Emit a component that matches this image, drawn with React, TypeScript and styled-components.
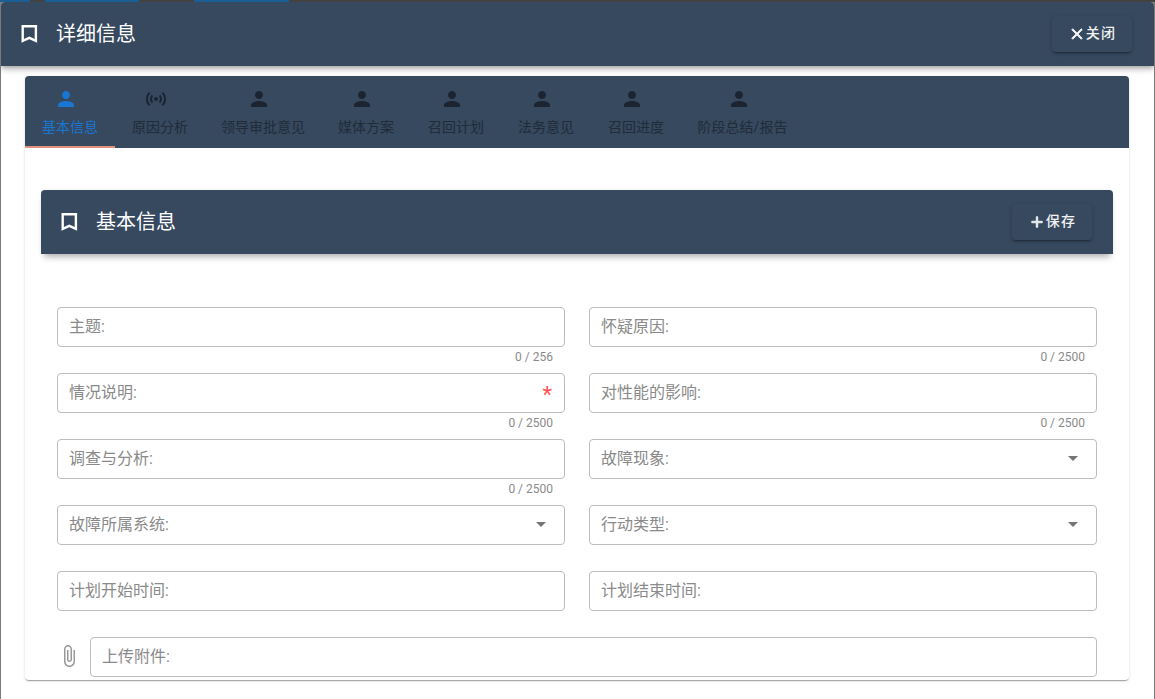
import React from "react";
import styled, { createGlobalStyle } from "styled-components";

const GlobalStyle = createGlobalStyle`
  html, body {
    margin: 0;
    padding: 0;
    height: 100%;
    overflow: hidden;
    background: #7a7a7a;
    font-family: Roboto, "Noto Sans CJK SC", sans-serif;
  }
`;

const BookmarkIcon = () => (
  <svg width="24" height="24" viewBox="0 0 24 24" fill="none" stroke="currentColor" strokeWidth="2.4">
    <path d="M5.700 4.200H18.900V18.800L12.300 15.800 5.700 18.800Z" />
  </svg>
);

const PersonIcon = () => (
  <svg width="24" height="24" viewBox="0 0 24 24" fill="currentColor">
    <path d="M12 12c2.210 0 4-1.790 4-4s-1.790-4-4-4-4 1.790-4 4 1.790 4 4 4zm0 2c-2.670 0-8 1.340-8 4v2h16v-2c0-2.660-5.330-4-8-4z" />
  </svg>
);

const CastIcon = () => (
  <svg width="24" height="24" viewBox="0 0 24 24" fill="currentColor">
    <path d="M7.760 16.240C6.670 15.160 6 13.660 6 12s.67-3.160 1.760-4.240l1.420 1.420C8.450 9.900 8 10.900 8 12c0 1.100.45 2.100 1.170 2.830l-1.410 1.410zm8.480 0C17.330 15.160 18 13.660 18 12s-.67-3.160-1.760-4.240l-1.420 1.420C15.550 9.900 16 10.900 16 12c0 1.100-.45 2.100-1.170 2.830l1.410 1.410zM12 10c-1.100 0-2 .9-2 2s.9 2 2 2 2-.9 2-2-.9-2-2-2zm8 2c0 2.210-.9 4.210-2.340 5.660l1.420 1.420C20.880 17.260 22 14.760 22 12s-1.120-5.260-2.920-7.080l-1.420 1.420C19.100 7.790 20 9.790 20 12zM6.340 6.340 4.920 4.920C3.120 6.740 2 9.240 2 12s1.120 5.260 2.920 7.080l1.420-1.420C4.900 16.210 4 14.210 4 12s.9-4.210 2.340-5.660z" />
  </svg>
);

const CloseIcon = () => (
  <svg width="18" height="18" viewBox="0 0 24 24" fill="currentColor" stroke="currentColor" strokeWidth="1.2">
    <path d="M19 6.410 17.590 5 12 10.590 6.410 5 5 6.410 10.590 12 5 17.590 6.410 19 12 13.410 17.590 19 19 17.590 13.410 12z" />
  </svg>
);

const PlusIcon = () => (
  <svg width="18" height="18" viewBox="0 0 24 24" fill="currentColor" stroke="currentColor" strokeWidth="1.2">
    <path d="M19 13h-6v6h-2v-6H5v-2h6V5h2v6h6v2z" />
  </svg>
);

const ClipIcon = () => (
  <svg width="24" height="24" viewBox="0 0 24 24" fill="currentColor">
    <path d="M16.500 6v11.500c0 2.210-1.790 4-4 4s-4-1.790-4-4V5c0-1.380 1.120-2.500 2.500-2.500s2.500 1.120 2.500 2.500v10.500c0 .55-.45 1-1 1s-1-.45-1-1V6H10v9.500c0 1.380 1.120 2.500 2.500 2.500s2.500-1.120 2.500-2.500V5c0-2.210-1.790-4-4-4S7 2.790 7 5v12.500c0 3.040 2.460 5.500 5.500 5.500s5.500-2.460 5.500-5.500V6h-1.500z" />
  </svg>
);

const tabs = [
  { label: "基本信息", icon: "person", width: 90 },
  { label: "原因分析", icon: "cast", width: 90 },
  { label: "领导审批意见", icon: "person", width: 116 },
  { label: "媒体方案", icon: "person", width: 90 },
  { label: "召回计划", icon: "person", width: 90 },
  { label: "法务意见", icon: "person", width: 90 },
  { label: "召回进度", icon: "person", width: 90 },
  { label: "阶段总结/报告", icon: "person", width: 123 },
];

type Field = { label: string; count?: string; required?: boolean; select?: boolean };

const fields: Field[] = [
  { label: "主题:", count: "0 / 256" },
  { label: "怀疑原因:", count: "0 / 2500" },
  { label: "情况说明:", count: "0 / 2500", required: true },
  { label: "对性能的影响:", count: "0 / 2500" },
  { label: "调查与分析:", count: "0 / 2500" },
  { label: "故障现象:", select: true },
  { label: "故障所属系统:", select: true },
  { label: "行动类型:", select: true },
  { label: "计划开始时间:" },
  { label: "计划结束时间:" },
];

const App = () => {
  return (
    <>
      <GlobalStyle />
      <Backdrop>
        <BackTab $width={30} />
        <BackTab $width={94} $gap={15} />
        <BackTab $width={95} $gap={55} />
      </Backdrop>
      <Dialog>
        <DialogBar>
          <BarTitle>
            <BookmarkIcon />
            <DialogTitle>详细信息</DialogTitle>
          </BarTitle>
          <BarButton>
            <CloseIcon />
            <ButtonText>关闭</ButtonText>
          </BarButton>
        </DialogBar>
        <Card>
          <TabBar>
            {tabs.map((tab, i) => (
              <Tab key={tab.label} $active={i === 0} $width={tab.width}>
                <TabIcon>{tab.icon === "cast" ? <CastIcon /> : <PersonIcon />}</TabIcon>
                <TabLabel $active={i === 0}>{tab.label}</TabLabel>
              </Tab>
            ))}
          </TabBar>
          <CardBody>
            <SectionBar>
              <BarTitle>
                <BookmarkIcon />
                <SectionTitle>基本信息</SectionTitle>
              </BarTitle>
              <BarButton>
                <PlusIcon />
                <ButtonText>保存</ButtonText>
              </BarButton>
            </SectionBar>
            <FormGrid>
              {fields.map((field) => (
                <FieldCell key={field.label}>
                  <FieldBox>
                    <FieldLabel>{field.label}</FieldLabel>
                    {field.required && <Required>*</Required>}
                    {field.select && <Arrow />}
                  </FieldBox>
                  <Count>{field.count}</Count>
                </FieldCell>
              ))}
            </FormGrid>
            <UploadRow>
              <ClipWrap>
                <ClipIcon />
              </ClipWrap>
              <FieldBox>
                <FieldLabel>上传附件:</FieldLabel>
              </FieldBox>
            </UploadRow>
          </CardBody>
        </Card>
      </Dialog>
    </>
  );
};

const Backdrop = styled.div`
  display: flex;
  height: 2px;
  overflow: hidden;
  background: #424242;
`;

const BackTab = styled.div<{ $width: number; $gap?: number }>`
  width: ${(p) => p.$width}px;
  margin-left: ${(p) => p.$gap ?? 0}px;
  background: #1a5f94;
`;

const Dialog = styled.div`
  margin: 0 1px;
  height: 697px;
  overflow: hidden;
  background: #fff;
  border-radius: 4px 4px 0 0;
`;

const DialogBar = styled.div`
  display: flex;
  align-items: center;
  justify-content: space-between;
  height: 64px;
  padding: 0 22px 0 16px;
  background: #36495f;
  color: #fff;
  box-shadow: 0 2px 4px -1px rgba(0, 0, 0, 0.2), 0 4px 5px rgba(0, 0, 0, 0.14),
    0 1px 10px rgba(0, 0, 0, 0.12);
  position: relative;
`;

const BarTitle = styled.div`
  display: flex;
  align-items: center;
  gap: 15px;
`;

const DialogTitle = styled.span`
  font-size: 20px;
  font-weight: 400;
  line-height: 32px;
`;

const SectionTitle = styled(DialogTitle)``;

const BarButton = styled.div`
  display: flex;
  align-items: center;
  justify-content: center;
  width: 80px;
  height: 36px;
  border-radius: 4px;
  background: #36495f;
  color: #f2f2f2;
  box-shadow: 0 3px 1px -2px rgba(0, 0, 0, 0.2), 0 2px 2px rgba(0, 0, 0, 0.14),
    0 1px 5px rgba(0, 0, 0, 0.12);
`;

const ButtonText = styled.span`
  font-size: 14px;
  font-weight: 500;
  line-height: 18px;
  letter-spacing: 1.25px;
  padding-bottom: 3px;
`;

const Card = styled.div`
  margin: 10px 25px 0 24px;
  height: 604px;
  border-radius: 4px;
  background: #fff;
  box-shadow: 0 2px 1px -1px rgba(0, 0, 0, 0.2), 0 1px 1px rgba(0, 0, 0, 0.14),
    0 1px 3px rgba(0, 0, 0, 0.12);
`;

const TabBar = styled.div`
  display: flex;
  height: 72px;
  background: #36495f;
  border-radius: 4px 4px 0 0;
`;

const Tab = styled.div<{ $active: boolean; $width: number }>`
  box-sizing: border-box;
  width: ${(p) => p.$width}px;
  display: flex;
  flex-direction: column;
  align-items: center;
  padding-top: 11px;
  color: ${(p) => (p.$active ? "#1976d2" : "#1c2431")};
  border-bottom: 2px solid ${(p) => (p.$active ? "#e4927c" : "transparent")};
`;

const TabIcon = styled.span`
  display: flex;
  margin-right: 8px;
`;

const TabLabel = styled.span<{ $active: boolean }>`
  margin-top: 6px;
  font-size: 14px;
  line-height: 20px;
  white-space: nowrap;
  opacity: ${(p) => (p.$active ? 1 : 0.8)};
`;

const CardBody = styled.div`
  padding: 42px 16px 0;
`;

const SectionBar = styled(DialogBar)`
  padding: 0 21px 0 16px;
  border-radius: 4px 4px 0 0;
  box-shadow: 0 6px 6px -3px rgba(0, 0, 0, 0.3), 0 -1px 6px -2px rgba(0, 0, 0, 0.08);
`;

const FormGrid = styled.div`
  display: grid;
  grid-template-columns: 1fr 1fr;
  column-gap: 24px;
  margin-top: 53px;
  padding: 0 16px;
`;

const FieldCell = styled.div`
  height: 66px;
`;

const FieldBox = styled.div`
  box-sizing: border-box;
  flex: 1;
  height: 40px;
  padding: 0 11px;
  display: flex;
  align-items: center;
  justify-content: space-between;
  border: 1px solid #bdbdbd;
  border-radius: 4px;
  background: #fff;
`;

const FieldLabel = styled.span`
  font-size: 16px;
  line-height: 20px;
  padding-bottom: 1px;
  color: #8a8a8a;
`;

const Required = styled.span`
  font-size: 22px;
  line-height: 22px;
  padding-top: 4px;
  margin-right: 1px;
  color: #ff5252;
`;

const Arrow = styled.span`
  width: 0;
  height: 0;
  margin: 0 7px 2px 0;
  border-left: 5px solid transparent;
  border-right: 5px solid transparent;
  border-top: 5px solid #757575;
`;

const Count = styled.div`
  height: 20px;
  padding-right: 12px;
  text-align: right;
  font-size: 12px;
  line-height: 20px;
  color: #8a8a8a;
`;

const UploadRow = styled.div`
  display: flex;
  align-items: center;
  gap: 9px;
  padding: 0 16px;
`;

const ClipWrap = styled.div`
  display: flex;
  margin-bottom: 2px;
  color: #999;
`;

export default App;
